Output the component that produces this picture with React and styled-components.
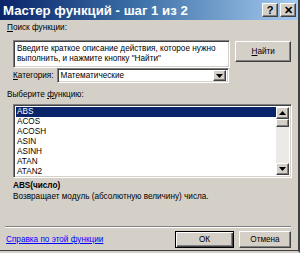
import React from "react";
import styled, { createGlobalStyle, css } from "styled-components";

const Global = createGlobalStyle`
  html, body { margin: 0; padding: 0; background: #d4d0c8; }
  * { box-sizing: border-box; }
`;

const raised = css`
  border: 1px solid;
  border-color: #ffffff #404040 #404040 #ffffff;
  box-shadow: inset -1px -1px 0 #808080, inset 1px 1px 0 #d4d0c8;
`;

const sunken = css`
  border: 1px solid;
  border-color: #808080 #ffffff #ffffff #808080;
  box-shadow: inset 1px 1px 0 #404040, inset -1px -1px 0 #d4d0c8;
`;

const Window = styled.div`
  width: 300px;
  height: 253px;
  background: #d4d0c8;
  border-right: 2px solid #404040;
  border-bottom: 2px solid #d4d0c8;
  box-shadow: inset 0 -1px 0 #404040;
  display: flex;
  flex-direction: column;
  font-family: "Liberation Sans", Tahoma, sans-serif;
  font-size: 8.2px;
  color: #000;
  overflow: hidden;
`;

const TitleBar = styled.div`
  height: 20px;
  flex: none;
  display: flex;
  align-items: center;
  padding: 0 2px 0 3px;
  background: linear-gradient(90deg, #0a246a 0%, #3a6ea5 45%, #a6caf0 100%);
`;

const Title = styled.div`
  flex: 1;
  color: #fff;
  font-weight: bold;
  font-size: 13.2px;
  white-space: nowrap;
`;

const TitleButton = styled.div`
  width: 16px;
  height: 14px;
  margin-left: ${(p) => (p.$gap ? "2px" : "0")};
  background: #d4d0c8;
  ${raised};
  display: flex;
  align-items: center;
  justify-content: center;
  font-weight: bold;
  font-size: 11px;
  line-height: 1;
  color: #000;
`;

const Body = styled.div`
  flex: 1;
  display: flex;
  flex-direction: column;
  padding: 2px 7px 0 7px;
`;

const Label = styled.div`
  height: 12px;
  line-height: 12px;
  white-space: nowrap;
  margin-top: ${(p) => p.$mt || 0}px;
`;

const U = styled.span`
  text-decoration: underline;
`;

const SearchRow = styled.div`
  display: flex;
  align-items: flex-start;
  margin-top: 6px;
  margin-left: 6px;
`;

const SearchBox = styled.div`
  width: 219px;
  height: 28px;
  background: #fff;
  ${sunken};
  padding: 3px 3px;
  line-height: 10px;
  white-space: nowrap;
`;

const Button = styled.div`
  width: ${(p) => p.$w}px;
  height: ${(p) => p.$h || 17}px;
  margin-left: ${(p) => p.$ml || 0}px;
  margin-top: ${(p) => p.$mt || 0}px;
  background: #d4d0c8;
  display: flex;
  align-items: center;
  justify-content: center;
  ${raised};
  ${(p) =>
    p.$default &&
    css`
      border: 1px solid #000;
      box-shadow: inset 1px 1px 0 #fff, inset -1px -1px 0 #404040,
        inset -2px -2px 0 #808080;
    `}
`;

const CategoryRow = styled.div`
  display: flex;
  align-items: center;
  margin-left: 6px;
  height: 15px;
`;

const Select = styled.div`
  margin-left: 3px;
  width: 172px;
  height: 15px;
  background: #fff;
  ${sunken};
  display: flex;
  align-items: center;
  padding: 0 2px 0 3px;
`;

const SelectText = styled.div`
  flex: 1;
  white-space: nowrap;
`;

const ArrowBtn = styled.div`
  width: 13px;
  height: 11px;
  background: #d4d0c8;
  ${raised};
  display: flex;
  align-items: center;
  justify-content: center;
`;

const ListWrap = styled.div`
  margin-top: 3px;
  margin-left: 6px;
  width: 279px;
  height: 74px;
  background: #fff;
  ${sunken};
  display: flex;
  padding: 2px;
  overflow: hidden;
`;

const Items = styled.div`
  flex: 1;
  display: flex;
  flex-direction: column;
  overflow: hidden;
`;

const Item = styled.div`
  flex: none;
  height: 10px;
  line-height: 10px;
  padding-left: 1px;
  white-space: nowrap;
  background: ${(p) => (p.$sel ? "#0a246a" : "transparent")};
  color: ${(p) => (p.$sel ? "#fff" : "#000")};
`;

const ScrollBar = styled.div`
  width: 13px;
  display: flex;
  flex-direction: column;
  background: #eceae6;
`;

const ScrollBtn = styled.div`
  height: 12px;
  background: #d4d0c8;
  ${raised};
  display: flex;
  align-items: center;
  justify-content: center;
`;

const Thumb = styled.div`
  height: 8px;
  background: #d4d0c8;
  ${raised};
`;

const Track = styled.div`
  flex: 1;
`;

const FuncName = styled.div`
  margin-top: 2px;
  margin-left: 6px;
  font-weight: bold;
  height: 11px;
  line-height: 11px;
`;

const FuncDesc = styled.div`
  margin-left: 6px;
  height: 11px;
  line-height: 11px;
  white-space: nowrap;
`;

const Spacer = styled.div`
  flex: 1;
`;

const Separator = styled.div`
  height: 2px;
  margin: 0 0 0 -2px;
  border-top: 1px solid #808080;
  border-bottom: 1px solid #ffffff;
`;

const Footer = styled.div`
  display: flex;
  align-items: flex-start;
  height: 23px;
  margin-left: -1px;
`;

const Link = styled.a`
  color: #0000ff;
  text-decoration: underline;
  margin-top: 7px;
  white-space: nowrap;
  flex: 1;
`;

const Arrow = ({ up }) => (
  <svg width="7" height="4" viewBox="0 0 7 4">
    <path d={up ? "M3.5 0 L7 4 L0 4 Z" : "M0 0 L7 0 L3.5 4 Z"} fill="#000" />
  </svg>
);

const items = ["ABS", "ACOS", "ACOSH", "ASIN", "ASINH", "ATAN", "ATAN2"];

export default function App() {
  return (
    <>
      <Global />
      <Window>
        <TitleBar>
          <Title>Мастер функций - шаг 1 из 2</Title>
          <TitleButton>?</TitleButton>
          <TitleButton $gap>✕</TitleButton>
        </TitleBar>
        <Body>
          <Label>
            <U>П</U>оиск функции:
          </Label>
          <SearchRow>
            <SearchBox>
              Введите краткое описание действия, которое нужно
              <br />
              выполнить, и нажмите кнопку "Найти"
            </SearchBox>
            <Button $w={56} $h={21} $ml={5} $mt={1}>
              <span>
                <U>Н</U>айти
              </span>
            </Button>
          </SearchRow>
          <CategoryRow>
            <Label>
              <U>К</U>атегория:
            </Label>
            <Select>
              <SelectText>Математические</SelectText>
              <ArrowBtn>
                <Arrow />
              </ArrowBtn>
            </Select>
          </CategoryRow>
          <Label $mt={6}>
            Выберите <U>ф</U>ункцию:
          </Label>
          <ListWrap>
            <Items>
              {items.map((it, i) => (
                <Item key={it} $sel={i === 0}>
                  {it}
                </Item>
              ))}
            </Items>
            <ScrollBar>
              <ScrollBtn>
                <Arrow up />
              </ScrollBtn>
              <Thumb />
              <Track />
              <ScrollBtn>
                <Arrow />
              </ScrollBtn>
            </ScrollBar>
          </ListWrap>
          <FuncName>ABS(число)</FuncName>
          <FuncDesc>Возвращает модуль (абсолютную величину) числа.</FuncDesc>
          <Spacer />
          <Separator />
          <Footer>
            <Link href="#">Справка по этой функции</Link>
            <Button $w={59} $h={17} $mt={3} $default>
              ОК
            </Button>
            <Button $w={52} $h={17} $mt={3} $ml={5}>
              Отмена
            </Button>
          </Footer>
        </Body>
      </Window>
    </>
  );
}
